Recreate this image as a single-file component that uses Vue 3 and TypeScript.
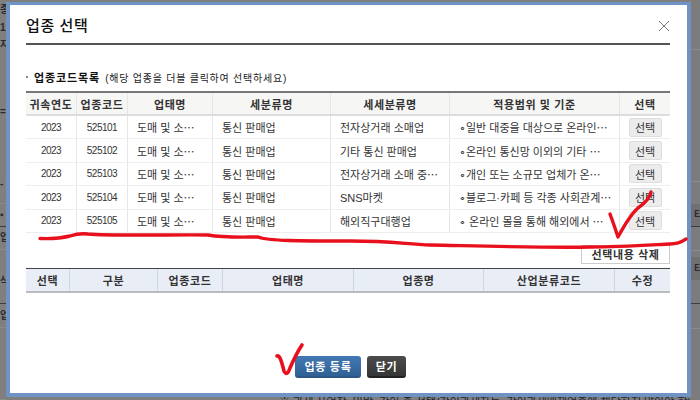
<script setup lang="ts">
interface Row { year: string; code: string; biz: string; sub: string; detail: string; scope: string }
interface Band { h: number; tone: string; text?: string }
const biz = '도매 및 소⋯'
const sub = '통신 판매업'
const rows: Row[] = [
  { year: '2023', code: '525101', biz, sub, detail: '전자상거래 소매업', scope: '∘일반 대중을 대상으로 온라인⋯' },
  { year: '2023', code: '525102', biz, sub, detail: '기타 통신 판매업', scope: '∘온라인 통신망 이외의 기타 ⋯' },
  { year: '2023', code: '525103', biz, sub, detail: '전자상거래 소매 중⋯', scope: '∘개인 또는 소규모 업체가 온⋯' },
  { year: '2023', code: '525104', biz, sub, detail: 'SNS마켓', scope: '∘블로그·카페 등 각종 사회관계⋯' },
  { year: '2023', code: '525105', biz, sub, detail: '해외직구대행업', scope: '∘ 온라인 몰을 통해 해외에서 ⋯' },
]
const heads = ['귀속연도', '업종코드', '업태명', '세분류명', '세세분류명', '적용범위 및 기준', '선택']
const lowerHeads = ['선택', '구분', '업종코드', '업태명', '업종명', '산업분류코드', '수정']
const leftBands: Band[] = [
  { h: 4, tone: 'plain' }, { h: 12, tone: 'plain', text: '종' }, { h: 24, tone: 'plain', text: '1' }, { h: 10, tone: 'plain', text: '지' },
  { h: 56, tone: 'plain' }, { h: 12, tone: 'plain', text: '=' }, { h: 60, tone: 'plain' }, { h: 12, tone: 'plain', text: '-' },
  { h: 14, tone: 'line' }, { h: 23, tone: 'dark-line', text: '▪' }, { h: 23, tone: 'line', text: '업' }, { h: 22, tone: 'plain' },
  { h: 18, tone: 'plain', text: '삭' }, { h: 14, tone: 'dark-line' }, { h: 24, tone: 'line', text: '업' }, { h: 72, tone: 'line' },
]
const rightBands: Band[] = [
  { h: 50, tone: 'line' }, { h: 132, tone: 'line' }, { h: 22, tone: 'plain' }, { h: 23, tone: 'shade-dark', text: '타' },
  { h: 24, tone: 'line' }, { h: 6, tone: 'plain' }, { h: 23, tone: 'shade', text: '타' }, { h: 24, tone: 'dark-line' },
  { h: 25, tone: 'line' }, { h: 71, tone: 'plain' },
]
</script>

<template>
  <div class="page">
    <div class="strip strip-left">
      <div v-for="(b, i) in leftBands" :key="i" class="band" :class="b.tone" :style="{ height: b.h + 'px' }">{{ b.text }}</div>
    </div>
    <div class="strip strip-right">
      <div v-for="(b, i) in rightBands" :key="i" class="band" :class="b.tone" :style="{ height: b.h + 'px' }">{{ b.text }}</div>
    </div>
    <div class="note">※ 과세 사업장: 일반, 간이 중 선택(간이과세자는, 간이과세배제업종에 해당하지 않아야 함)</div>
    <div class="modal">
      <header class="title-row">
        <h1>업종 선택</h1>
        <svg class="close" width="12" height="12" viewBox="0 0 12 12"><path d="M1 1l10 10M11 1L1 11" stroke="#777" stroke-width="1" fill="none" /></svg>
      </header>
      <h2 class="section"><span class="dot"></span><b>업종코드목록</b><span class="hint">(해당 업종을 더블 클릭하여 선택하세요)</span></h2>
      <div class="grid upper head">
        <div v-for="h in heads" :key="h" class="th">{{ h }}</div>
      </div>
      <div v-for="r in rows" :key="r.code" class="grid upper row">
        <div class="td c num">{{ r.year }}</div>
        <div class="td c num">{{ r.code }}</div>
        <div class="td l">{{ r.biz }}</div>
        <div class="td l">{{ r.sub }}</div>
        <div class="td l">{{ r.detail }}</div>
        <div class="td l">{{ r.scope }}</div>
        <div class="td c"><button class="pick">선택</button></div>
      </div>
      <div class="del-row"><button class="del">선택내용 삭제</button></div>
      <div class="grid lower head2">
        <div v-for="h in lowerHeads" :key="h" class="th2">{{ h }}</div>
      </div>
      <div class="actions">
        <button class="blue">업종 등록</button>
        <button class="dark">닫기</button>
      </div>
    </div>
    <svg class="ink" width="700" height="400" viewBox="0 0 700 400" fill="none" stroke="#e8101c" stroke-linecap="round" stroke-linejoin="round">
      <path stroke-width="3.4" d="M40 238.5C50 239 62 238 70 236C76 234 80 233 88 234C110 236 180 234.500 208 235C225 238 245 237 258 237C268 241 300 241 350 241C390 241 405 244 430 245C480 246 550 248 590 247C620 247 650 245 670 244C680 244 683 241 686 239" />
      <path stroke-width="3.4" d="M610 214C613 222 616 231 618 237C624 226 630 215 638 208C645 203 650 198 651 192" />
      <path stroke-width="3.6" d="M277 356C280 355 282 363 284 371C286 375 288 374 290 368C293 361 298 351 302 345" />
    </svg>
  </div>
</template>

<style>
body { margin: 0; }
</style>

<style scoped>
.page {
  position: relative;
  width: 700px;
  height: 400px;
  overflow: hidden;
  background: #7f7f7f;
  box-sizing: border-box;
  padding: 2px 0 0 6px;
  font-family: "Liberation Sans", "Noto Sans CJK KR", sans-serif;
  color: #333;
}
.strip {
  position: absolute;
  top: 0;
  display: flex;
  flex-direction: column;
  overflow: hidden;
  font-size: 10px;
  font-weight: 700;
  color: #2a2a34;
}
.strip-left { left: 0; width: 6px; }
.strip-right { left: 691px; width: 9px; background: #7c7c7c; padding-left: 3px; box-sizing: border-box; }
.band {
  box-sizing: border-box;
  flex: none;
  display: flex;
  align-items: center;
  line-height: 1;
  white-space: nowrap;
}
.strip-right .band { margin-left: -3px; padding-left: 3px; }
.line { border-bottom: 1px solid #8b8b8b; }
.dark-line { border-bottom: 1px solid #3d3d3d; }
.shade { background: #707070; }
.shade-dark { background: #707070; border-bottom: 1px solid #3d3d3d; }
.note {
  position: absolute;
  left: 279px;
  top: 396px;
  font-size: 11px;
  line-height: 12px;
  color: #1f2330;
  white-space: nowrap;
}
.modal {
  position: relative;
  box-sizing: border-box;
  width: 685px;
  height: 395px;
  background: #fff;
  border: 4px solid #6f94c4;
  border-top-width: 3px;
  padding: 0 17px 0 16px;
}
.title-row {
  box-sizing: border-box;
  display: flex;
  align-items: center;
  justify-content: space-between;
  height: 40px;
  border-bottom: 2px solid #555;
}
.title-row h1 {
  margin: 0;
  font-size: 15px;
  font-weight: 500;
  letter-spacing: 0.6px;
  color: #111;
}
.close { margin-right: 0; margin-top: 3px; }
.section {
  display: flex;
  align-items: center;
  margin: 26px 0 8px;
  height: 12px;
  font-size: 11px;
  font-weight: 400;
  letter-spacing: 0.9px;
  color: #222;
  white-space: pre;
}
.dot { width: 2px; height: 2px; background: #888; margin-right: 6px; }
.section b { color: #111; font-weight: 700; margin-right: 5px; }
.hint { font-size: 10px; letter-spacing: 0.77px; }
.grid { display: grid; }
.upper { grid-template-columns: 51px 51px 85px 118px 119px 170px 50px; }
.lower { grid-template-columns: 44px 88px 65px 131px 130px 131px 55px; }
.head {
  height: 21px;
  border-top: 2px solid #777;
  border-bottom: 2px solid #ddd;
  box-sizing: content-box;
  background: #f6f6f4;
}
.th {
  display: flex;
  align-items: center;
  justify-content: center;
  font-size: 11px;
  letter-spacing: 0.6px;
  font-weight: 700;
  color: #333;
  border-right: 1px solid #e6e6e6;
  white-space: nowrap;
}
.th:last-child { border-right: 0; }
.row {
  height: 23.4px;
  border-bottom: 1px solid #eee;
  box-sizing: border-box;
}
.td {
  display: flex;
  align-items: center;
  font-size: 11px;
  color: #333;
  border-right: 1px solid #e6e6e6;
  white-space: nowrap;
  overflow: hidden;
}
.td:last-child { border-right: 0; }
.c { justify-content: center; }
.num { font-size: 10px; letter-spacing: -0.5px; }
.l { padding-left: 9px; }
.pick {
  width: 33px;
  height: 19px;
  padding: 0;
  border: 1px solid #ddd;
  border-radius: 2px;
  background: #ececec;
  font: inherit;
  font-size: 11px;
  color: #333;
}
.del-row {
  display: flex;
  justify-content: flex-end;
  margin-top: 12px;
  height: 23px;
}
.del {
  width: 89px;
  height: 19px;
  padding: 0;
  border: 1px solid #ccc;
  background: #fff;
  font: inherit;
  font-size: 11px;
  letter-spacing: 0.6px;
  font-weight: 700;
  color: #333;
}
.head2 {
  box-sizing: border-box;
  height: 25px;
  border-top: 1px solid #444;
  border-bottom: 2px solid #bbb;
  background: #e9edf6;
}
.th2 {
  display: flex;
  align-items: center;
  justify-content: center;
  font-size: 11px;
  letter-spacing: 0.6px;
  font-weight: 700;
  color: #333;
  border-right: 1px solid #cfd6e2;
}
.th2:last-child { border-right: 0; }
.actions {
  display: flex;
  justify-content: center;
  gap: 6px;
  margin-top: 63px;
  padding-left: 5px;
}
.actions button {
  box-sizing: border-box;
  height: 22px;
  padding: 0;
  border: 0;
  border-radius: 3px;
  font: inherit;
  font-size: 11px;
  letter-spacing: 0.7px;
  font-weight: 700;
  color: #fff;
}
.actions .blue { width: 66px; background: linear-gradient(#4278b2, #2f6196); border-bottom: 2px solid #2b5688; }
.actions .dark { width: 39px; background: linear-gradient(#4c4c4c, #363636); border-bottom: 2px solid #222; }
.ink { position: absolute; left: 0; top: 0; pointer-events: none; }
</style>
